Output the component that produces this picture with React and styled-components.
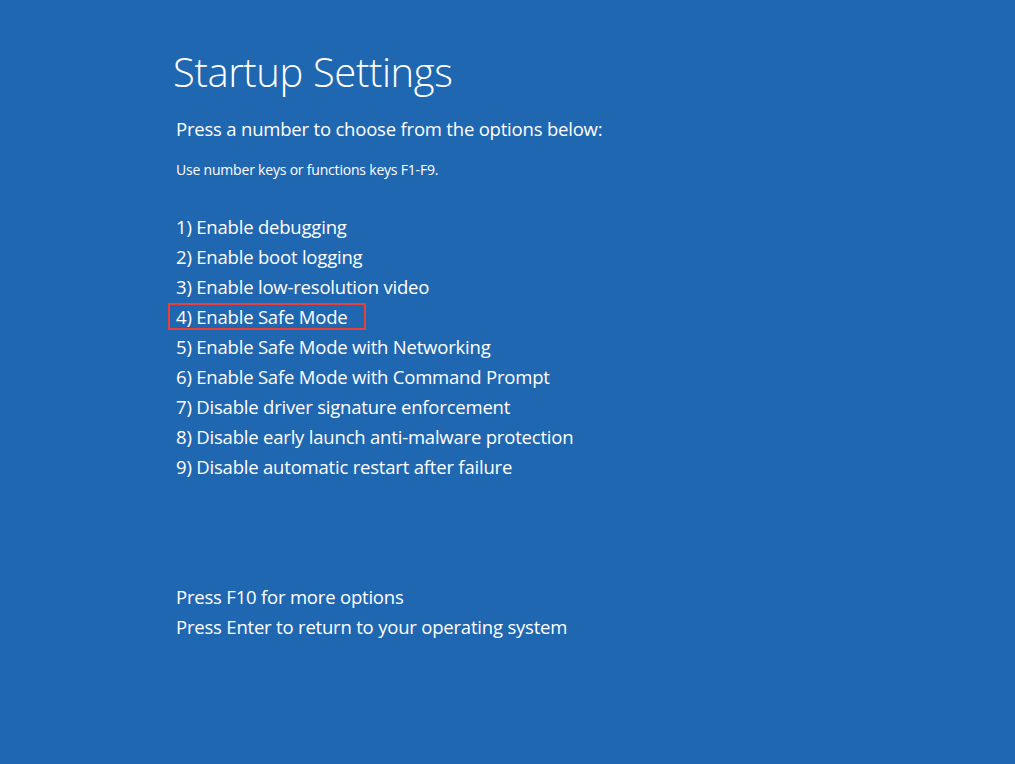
import React from "react";
import styled, { createGlobalStyle } from "styled-components";

const Global = createGlobalStyle`
  html, body { margin: 0; padding: 0; background: #2067b2; }
  body { font-family: "Open Sans", "Noto Sans", sans-serif; color: #fff; }
`;

const Screen = styled.div`
  width: 1015px;
  height: 764px;
  background: #2067b2;
  box-sizing: border-box;
  padding: 44px 0 0 173px;
  display: flex;
  flex-direction: column;
`;

const Title = styled.h1`
  margin: 0;
  font-weight: 300;
  font-size: 40px;
  line-height: 56px;
  letter-spacing: -0.4px;
`;

const Lead = styled.p`
  margin: 16px 0 0 3px;
  font-size: 18.5px;
  line-height: 26px;
  letter-spacing: -0.2px;
`;

const Hint = styled.p`
  margin: 19px 0 0 3px;
  font-size: 14px;
  line-height: 18px;
  letter-spacing: -0.2px;
`;

const List = styled.ul`
  list-style: none;
  margin: 33px 0 0 0;
  padding: 0;
  display: flex;
  flex-direction: column;
`;

const Item = styled.li`
  font-size: 18.5px;
  line-height: 30px;
  letter-spacing: -0.2px;
  display: flex;
`;

const Label = styled.span`
  padding: 0 17px 0 6px;
  margin-left: -5px;
  border: 2px solid ${(p) => (p.$selected ? "#e8403a" : "transparent")};
  line-height: 23px;
  margin-top: 1px;
  margin-bottom: 2px;
`;

const Footer = styled.div`
  margin-top: 100px;
  display: flex;
  flex-direction: column;
  padding-left: 3px;
`;

const FootLine = styled.div`
  font-size: 18.5px;
  line-height: 30px;
  letter-spacing: -0.2px;
`;

const options = [
  "1) Enable debugging",
  "2) Enable boot logging",
  "3) Enable low-resolution video",
  "4) Enable Safe Mode",
  "5) Enable Safe Mode with Networking",
  "6) Enable Safe Mode with Command Prompt",
  "7) Disable driver signature enforcement",
  "8) Disable early launch anti-malware protection",
  "9) Disable automatic restart after failure",
];

export default function App() {
  return (
    <>
      <Global />
      <Screen>
        <Title>Startup Settings</Title>
        <Lead>Press a number to choose from the options below:</Lead>
        <Hint>Use number keys or functions keys F1-F9.</Hint>
        <List>
          {options.map((o, i) => (
            <Item key={o}>
              <Label $selected={i === 3}>{o}</Label>
            </Item>
          ))}
        </List>
        <Footer>
          <FootLine>Press F10 for more options</FootLine>
          <FootLine>Press Enter to return to your operating system</FootLine>
        </Footer>
      </Screen>
    </>
  );
}
